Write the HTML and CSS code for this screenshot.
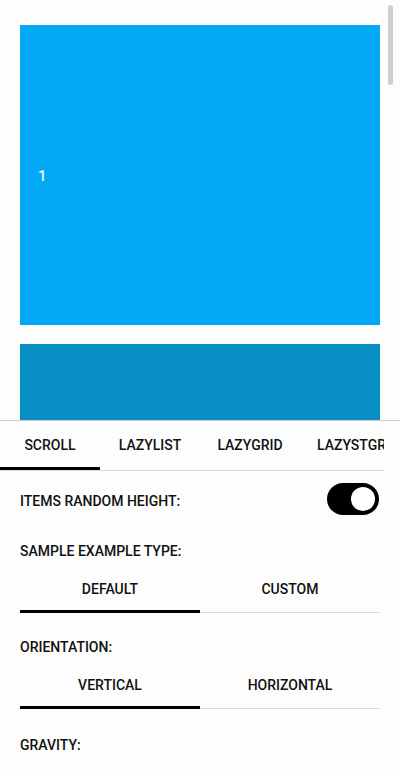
FILE: index.html
```html
<!DOCTYPE html>
<html>
<head>
<meta charset="utf-8">
<link rel="stylesheet" href="styles.css">
</head>
<body>
<div class="screen">
  <div class="scroller">
    <div class="item item-1"><span class="num">1</span></div>
    <div class="item item-2"></div>
    <div class="scrollbar"></div>
  </div>
  <div class="panel">
    <div class="tabs">
      <div class="tab active">SCROLL</div>
      <div class="tab">LAZYLIST</div>
      <div class="tab">LAZYGRID</div>
      <div class="tab tab-last">LAZYSTGRID</div>
    </div>
    <div class="settings">
      <div class="row">
        <span class="label">ITEMS RANDOM HEIGHT:</span>
        <div class="switch"><div class="thumb"></div></div>
      </div>
      <div class="label section">SAMPLE EXAMPLE TYPE:</div>
      <div class="segment">
        <div class="seg active">DEFAULT</div>
        <div class="seg">CUSTOM</div>
      </div>
      <div class="label section section-b">ORIENTATION:</div>
      <div class="segment">
        <div class="seg active">VERTICAL</div>
        <div class="seg">HORIZONTAL</div>
      </div>
      <div class="label section">GRAVITY:</div>
    </div>
  </div>
</div>
</body>
</html>
```
FILE: styles.css
```css
* { box-sizing: border-box; }
html, body {
  margin: 0;
  padding: 0;
  background: #fdfdfd;
}
body {
  font-family: Roboto, "Noto Sans", sans-serif;
  color: #111;
  width: 400px;
  height: 770px;
  overflow: hidden;
}
.screen {
  width: 400px;
  height: 770px;
  display: flex;
  flex-direction: column;
}
.scroller {
  position: relative;
  height: 420px;
  overflow: hidden;
  padding: 25px 20px 0 20px;
  display: flex;
  flex-direction: column;
  gap: 19px;
  flex: none;
}
.item {
  width: 360px;
  flex: none;
}
.item-1 {
  height: 300px;
  background: #03a9f4;
  display: flex;
  align-items: center;
  padding-left: 18px;
}
.num {
  color: #e8f6ff;
  font-size: 15px;
  font-weight: 500;
  line-height: 1;
  padding-top: 2px;
}
.item-2 {
  height: 120px;
  background: #0890c4;
}
.scrollbar {
  position: absolute;
  right: 7px;
  top: 5px;
  width: 5px;
  height: 80px;
  border-radius: 3px;
  background: #cfcfcf;
}
.panel {
  flex: 1;
  border-top: 1px solid #cdcdcd;
  background: #fdfdfd;
}
.tabs {
  display: flex;
  width: 384px;
  overflow: hidden;
  border-bottom: 1px solid #dcdcdc;
}
.tab {
  flex: none;
  width: 100px;
  height: 49px;
  display: flex;
  align-items: center;
  justify-content: center;
  font-size: 14px;
  font-weight: 500;
  white-space: nowrap;
  border-bottom: 3px solid transparent;
  padding-top: 2px;
}
.tab.active {
  border-bottom-color: #000;
}
.tab-last {
  justify-content: flex-start;
  padding-left: 17px;
}
.settings {
  padding: 0 20px;
  display: flex;
  flex-direction: column;
}
.row {
  margin-top: 12px;
  height: 32px;
  display: flex;
  align-items: center;
  justify-content: space-between;
}
.label {
  font-size: 14px;
  font-weight: 500;
  line-height: 20px;
  white-space: nowrap;
}
.row .label {
  padding-top: 3px;
}
.switch {
  width: 52px;
  height: 32px;
  border-radius: 16px;
  background: #000;
  display: flex;
  align-items: center;
  justify-content: flex-end;
  padding-right: 4px;
  margin-right: 1px;
}
.thumb {
  width: 24px;
  height: 24px;
  border-radius: 50%;
  background: #fff;
}
.section {
  margin-top: 26px;
}
.section-b {
  margin-top: 24px;
}
.segment {
  margin-top: 4px;
  display: flex;
}
.seg {
  flex: 1;
  height: 48px;
  display: flex;
  align-items: center;
  justify-content: center;
  font-size: 14px;
  font-weight: 500;
  border-bottom: 1px solid #dadada;
  padding-top: 2px;
  padding-bottom: 2px;
}
.seg.active {
  border-bottom: 3px solid #000;
  padding-top: 2px;
  padding-bottom: 0;
}
```
